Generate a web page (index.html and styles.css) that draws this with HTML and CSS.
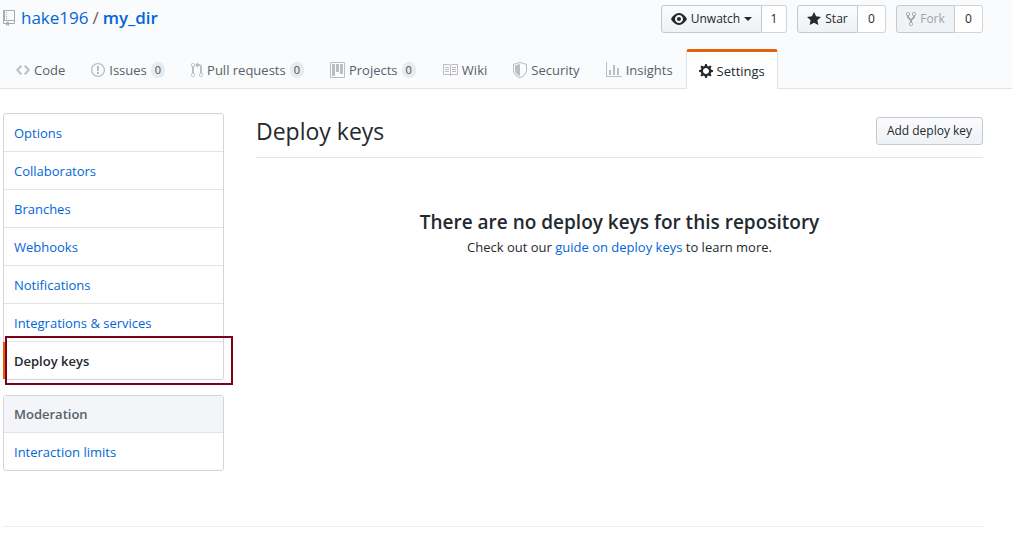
FILE: index.html
```html
<!DOCTYPE html>
<html lang="en">
<head>
<meta charset="utf-8">
<meta name="viewport" content="width=device-width, initial-scale=1">
<title>Deploy keys · hake196/my_dir</title>
<link rel="stylesheet" href="styles.css">
</head>
<body>
<header class="repo-header">
  <div class="container repo-bar">
    <h1 class="repo-title">
      <svg class="icon" width="12" height="16" viewBox="0 0 12 16" aria-hidden="true"><path fill-rule="evenodd" d="M4 9H3V8h1v1zm0-3H3v1h1V6zm0-2H3v1h1V4zm0-2H3v1h1V2zm8-1v12c0 .55-.45 1-1 1H6v2l-1.500-1.500L3 16v-2H1c-.55 0-1-.45-1-1V1c0-.55.45-1 1-1h10c.55 0 1 .45 1 1zm-1 10H1v2h2v-1h3v1h5v-2zm0-10H2v9h9V1z"/></svg>
      <a href="#owner">hake196</a><span class="slash">/</span><a class="repo-name" href="#repo">my_dir</a>
    </h1>
    <div class="actions">
      <div class="button-group">
        <button type="button" class="btn watch"><svg class="icon" width="16" height="16" viewBox="0 0 16 16" aria-hidden="true"><path fill-rule="evenodd" d="M8.060 2C3 2 0 8 0 8s3 6 8.060 6C13 14 16 8 16 8s-3-6-7.940-6zM8 12c-2.200 0-4-1.780-4-4 0-2.200 1.800-4 4-4 2.220 0 4 1.800 4 4 0 2.220-1.780 4-4 4zm2-4c0 1.110-.89 2-2 2-1.110 0-2-.89-2-2 0-1.110.89-2 2-2 1.110 0 2 .89 2 2z"/></svg>Unwatch<span class="caret"></span></button>
        <a class="count" href="#watchers">1</a>
      </div>
      <div class="button-group">
        <button type="button" class="btn star"><svg class="icon" width="14" height="16" viewBox="0 0 14 16" aria-hidden="true"><path d="M14 6l-4.900-.64L7 1 4.900 5.360 0 6l3.600 3.260L2.670 14 7 11.670 11.330 14l-.93-4.740L14 6z"/></svg>Star</button>
        <a class="count wide" href="#stargazers">0</a>
      </div>
      <div class="button-group">
        <button type="button" class="btn fork" disabled><svg class="icon" width="10" height="16" viewBox="0 0 10 16" aria-hidden="true"><path fill-rule="evenodd" d="M8 1a1.993 1.993 0 0 0-1 3.720V6L5 8 3 6V4.720A1.993 1.993 0 0 0 2 1a1.993 1.993 0 0 0-1 3.720V6.500l3 3v1.780A1.993 1.993 0 0 0 5 15a1.993 1.993 0 0 0 1-3.720V9.500l3-3V4.720A1.993 1.993 0 0 0 8 1zM2 4.200C1.340 4.200.8 3.650.8 3c0-.65.55-1.200 1.200-1.200.65 0 1.200.55 1.200 1.200 0 .65-.55 1.200-1.200 1.200zm3 10c-.66 0-1.200-.55-1.200-1.200 0-.65.55-1.200 1.200-1.200.65 0 1.200.55 1.200 1.200 0 .65-.55 1.200-1.200 1.200zm3-10c-.66 0-1.200-.55-1.200-1.200 0-.65.55-1.200 1.200-1.200.65 0 1.200.55 1.200 1.200 0 .65-.55 1.200-1.200 1.200z"/></svg>Fork</button>
        <a class="count wide" href="#forks">0</a>
      </div>
    </div>
  </div>
  <nav class="container tabs" aria-label="Repository">
    <a class="tab" href="#code"><svg class="icon" width="14" height="16" viewBox="0 0 14 16" aria-hidden="true"><path d="M9.500 3L8 4.500 11.500 8 8 11.500 9.500 13 14 8 9.500 3zm-5 0L0 8l4.500 5L6 11.500 2.500 8 6 4.500 4.500 3z"/></svg>Code</a>
    <a class="tab" href="#issues"><svg class="icon" width="14" height="16" viewBox="0 0 14 16" aria-hidden="true"><path fill-rule="evenodd" d="M7 2.300c3.140 0 5.700 2.560 5.700 5.700s-2.560 5.700-5.700 5.700A5.710 5.710 0 0 1 1.300 8c0-3.140 2.560-5.700 5.700-5.700zM7 1C3.140 1 0 4.140 0 8s3.140 7 7 7 7-3.140 7-7-3.140-7-7-7zm1 3H6v5h2V4zm0 6H6v2h2v-2z"/></svg>Issues<span class="counter">0</span></a>
    <a class="tab" href="#pulls"><svg class="icon" width="12" height="16" viewBox="0 0 12 16" aria-hidden="true"><path fill-rule="evenodd" d="M11 11.280V5c-.03-.78-.34-1.470-.94-2.060C9.460 2.350 8.780 2.030 8 2H7V0L4 3l3 3V4h1c.27.02.48.11.69.31.21.2.3.42.31.69v6.280A1.993 1.993 0 0 0 10 15a1.993 1.993 0 0 0 1-3.720zm-1 2.920c-.66 0-1.200-.55-1.200-1.200 0-.65.55-1.200 1.200-1.200.65 0 1.200.55 1.200 1.200 0 .65-.55 1.200-1.200 1.200zM4 3c0-1.110-.89-2-2-2a1.993 1.993 0 0 0-1 3.720v6.560A1.993 1.993 0 0 0 2 15a1.993 1.993 0 0 0 1-3.720V4.720c.59-.34 1-.98 1-1.720zm-.8 10c0 .66-.55 1.200-1.200 1.200-.65 0-1.200-.55-1.200-1.200 0-.65.55-1.200 1.200-1.200.65 0 1.200.55 1.200 1.200zM2 4.200C1.340 4.200.8 3.650.8 3c0-.65.55-1.200 1.200-1.200.65 0 1.200.55 1.200 1.200 0 .65-.55 1.200-1.200 1.200z"/></svg>Pull requests<span class="counter">0</span></a>
    <a class="tab" href="#projects"><svg class="icon" width="15" height="16" viewBox="0 0 15 16" aria-hidden="true"><path fill-rule="evenodd" d="M10 12h3V2h-3v10zm-4-2h3V2H6v8zm-4 4h3V2H2v12zm-1 1h13V1H1v14zM14 0H1a1 1 0 0 0-1 1v14a1 1 0 0 0 1 1h13a1 1 0 0 0 1-1V1a1 1 0 0 0-1-1z"/></svg>Projects<span class="counter">0</span></a>
    <a class="tab" href="#wiki"><svg class="icon" width="16" height="16" viewBox="0 0 16 16" aria-hidden="true"><path fill-rule="evenodd" d="M3 5h4v1H3V5zm0 3h4V7H3v1zm0 2h4V9H3v1zm11-5h-4v1h4V5zm0 2h-4v1h4V7zm0 2h-4v1h4V9zm2-6v9c0 .55-.45 1-1 1H9.500l-1 1-1-1H2c-.55 0-1-.45-1-1V3c0-.55.45-1 1-1h5.500l1 1 1-1H15c.55 0 1 .45 1 1zm-8 .5L7.500 3H2v9h6V3.500zm7-.5H9.500l-.5.5V12h6V3z"/></svg>Wiki</a>
    <a class="tab" href="#security"><svg class="icon" width="14" height="16" viewBox="0 0 14 16" aria-hidden="true"><path fill-rule="evenodd" d="M0 2l7-2 7 2v6.020C14 12.690 8.690 16 7 16c-1.690 0-7-3.310-7-7.980V2zm1 .75L7 1l6 1.750v5.268C13 12.104 8.449 15 7 15c-1.449 0-6-2.896-6-6.982V2.750zm1 .75L7 2v12c-1.207 0-5-2.482-5-5.985V3.500z"/></svg>Security</a>
    <a class="tab" href="#insights"><svg class="icon" width="16" height="16" viewBox="0 0 16 16" aria-hidden="true"><path d="M16 14v1H0V0h1v14h15zM5 13H3V8h2v5zm4 0H7V3h2v10zm4 0h-2V6h2v7z"/></svg>Insights</a>
    <a class="tab selected" href="#settings" aria-current="page"><svg class="icon" width="14" height="16" viewBox="0 0 14 16" aria-hidden="true"><path fill-rule="evenodd" d="M14 8.770v-1.600l-1.940-.64-.45-1.090.88-1.840-1.130-1.130-1.810.91-1.090-.45-.69-1.920h-1.600l-.63 1.940-1.110.45-1.840-.88-1.130 1.130.91 1.810-.45 1.090L0 7.230v1.590l1.940.64.45 1.090-.88 1.840 1.130 1.130 1.810-.91 1.090.45.69 1.920h1.590l.63-1.940 1.110-.45 1.840.88 1.130-1.130-.92-1.810.47-1.090L14 8.750v.02zM7 11c-1.660 0-3-1.340-3-3s1.340-3 3-3 3 1.340 3 3-1.340 3-3 3z"/></svg>Settings</a>
  </nav>
</header>
<div class="container layout">
  <aside class="sidebar">
    <nav class="menu" aria-label="Settings">
      <a class="menu-item" href="#options">Options</a>
      <a class="menu-item" href="#collaborators">Collaborators</a>
      <a class="menu-item" href="#branches">Branches</a>
      <a class="menu-item" href="#webhooks">Webhooks</a>
      <a class="menu-item" href="#notifications">Notifications</a>
      <a class="menu-item" href="#integrations">Integrations &amp; services</a>
      <a class="menu-item current" href="#keys" aria-current="page">Deploy keys</a>
    </nav>
    <nav class="menu" aria-labelledby="moderation">
      <h2 class="menu-heading" id="moderation">Moderation</h2>
      <a class="menu-item" href="#limits">Interaction limits</a>
    </nav>
  </aside>
  <main class="content">
    <div class="subhead">
      <h2 class="subhead-title">Deploy keys</h2>
      <button type="button" class="btn add">Add deploy key</button>
    </div>
    <section class="blank">
      <h3 class="blank-title">There are no deploy keys for this repository</h3>
      <p class="blank-text">Check out our <a href="#guide">guide on deploy keys</a> to learn more.</p>
    </section>
  </main>
</div>
<footer class="container footer"></footer>
</body>
</html>
```
FILE: styles.css
```css
* {
  box-sizing: border-box;
}

body {
  margin: 0;
  background: #fff;
  color: #24292e;
  font: 13px/20px "Open Sans", "Noto Sans", sans-serif;
}

a {
  color: #0366d6;
  text-decoration: none;
}

h1,
h2,
h3,
p {
  margin: 0;
}

.icon {
  display: block;
  flex: none;
  fill: currentColor;
}

.container {
  margin: 0 29px 0 3px;
}

.repo-header {
  background: #fafbfc;
  border-bottom: 1px solid #e1e4e8;
}

.repo-bar {
  display: flex;
  justify-content: space-between;
  align-items: flex-start;
  padding-top: 5px;
}

.repo-title {
  display: flex;
  align-items: center;
  font-size: 17px;
  font-weight: 400;
  line-height: 26px;
}

.repo-title .icon {
  margin-right: 6px;
  color: #a3aab1;
}

.slash {
  margin: 0 4px;
  color: #586069;
}

.repo-name {
  font-weight: 600;
}

.actions {
  display: flex;
  gap: 10px;
}

.button-group {
  display: flex;
}

.btn {
  display: flex;
  align-items: center;
  justify-content: center;
  gap: 4px;
  height: 28px;
  padding: 0 8px;
  border: 1px solid #c5c9cd;
  border-radius: 3px;
  background: linear-gradient(#fafbfc, #eff3f6 90%);
  color: #24292e;
  font: 500 12px/20px "Open Sans", "Noto Sans", sans-serif;
  white-space: nowrap;
}

.button-group .btn {
  border-radius: 3px 0 0 3px;
}

.btn:disabled {
  background: #eff3f6;
  color: #a0a4a8;
}

.watch {
  width: 101px;
}

.star {
  width: 61px;
}

.fork {
  width: 59px;
}

.add {
  width: 107px;
}

.caret {
  border: 4px solid transparent;
  border-top-color: currentColor;
  border-bottom: 0;
}

.count {
  width: 25px;
  border: 1px solid #d1d5da;
  border-left: 0;
  border-radius: 0 3px 3px 0;
  background: #fff;
  color: #24292e;
  font-size: 12px;
  font-weight: 500;
  line-height: 26px;
  text-align: center;
}

.count.wide {
  width: 28px;
}

.tabs {
  display: flex;
  margin-top: 16px;
  margin-bottom: -1px;
}

.tab {
  display: flex;
  align-items: center;
  gap: 4px;
  padding: 3px 12px 0;
  height: 40px;
  border: 1px solid transparent;
  border-top: 0;
  color: #586069;
  white-space: nowrap;
}

.tab .icon {
  color: #babec2;
}

.tab.selected {
  padding-top: 0;
  border-color: #e1e4e8;
  border-top: 3px solid #e36209;
  border-bottom: 0;
  border-radius: 3px 3px 0 0;
  background: #fff;
  color: #24292e;
}

.tab.selected .icon {
  color: #24292e;
}

.counter {
  padding: 0 4px;
  border-radius: 20px;
  background: #e8eaed;
  color: #444d56;
  font-size: 11px;
  font-weight: 500;
  line-height: 16px;
}

.layout {
  display: flex;
  gap: 32px;
  margin-top: 24px;
}

.sidebar {
  flex: 0 0 221px;
}

.menu {
  margin-bottom: 15px;
  border: 1px solid #d1d5da;
  border-radius: 3px;
}

.menu-item {
  display: block;
  padding: 9px 10px 8px;
  line-height: 20px;
  border-bottom: 1px solid #e1e4e8;
}

.menu-item:last-child {
  border-bottom: 0;
}

.menu-item.current {
  position: relative;
  color: #24292e;
  font-weight: 600;
}

.menu-item.current::before {
  content: "";
  position: absolute;
  top: 0;
  bottom: 0;
  left: -1px;
  width: 2px;
  background: #e36209;
}

/* Highlight frame drawn over the current entry */
.menu-item.current::after {
  content: "";
  position: absolute;
  top: -6px;
  right: -10px;
  bottom: -6px;
  left: 1px;
  border: 2px solid #7f0019;
}

.menu-heading {
  padding: 8px 10px;
  border-bottom: 1px solid #e1e4e8;
  background: #f3f5f8;
  color: #586069;
  font-size: 13px;
  font-weight: 600;
  line-height: 20px;
}

.content {
  flex: 1;
}

.subhead {
  display: flex;
  align-items: center;
  justify-content: space-between;
  padding: 4px 0 12px;
  border-bottom: 1px solid #e1e4e8;
}

.subhead-title {
  font-size: 23px;
  font-weight: 400;
  line-height: 28px;
}

.blank {
  padding: 50px 32px 32px;
  text-align: center;
}

.blank-title {
  font-size: 19px;
  font-weight: 600;
  line-height: 28px;
}

.blank-text {
  line-height: 22px;
}

.footer {
  margin-top: 40px;
  border-top: 1px solid #eaecef;
}
```
